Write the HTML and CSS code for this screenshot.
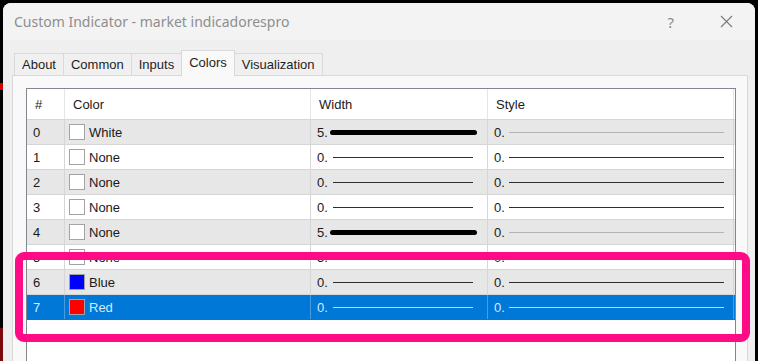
FILE: index.html
```html
<!DOCTYPE html>
<html lang="en">
<head>
  <meta charset="UTF-8" />
  <title>Custom Indicator - market indicadorespro</title>
  <link rel="stylesheet" href="styles.css">
</head>
<body>
  <div class="window">
    <div class="titlebar">
      <span class="title">Custom Indicator - market indicadorespro</span>
      <span class="help">?</span>
      <span class="close">
        <svg width="13" height="13" viewBox="0 0 13 13">
          <path d="M1 1 L12 12 M12 1 L1 12" stroke="#7a7a7a" stroke-width="1.1" fill="none"/>
        </svg>
      </span>
    </div>

    <div class="tabs">
      <div class="tab">About</div>
      <div class="tab">Common</div>
      <div class="tab">Inputs</div>
      <div class="tab active">Colors</div>
      <div class="tab">Visualization</div>
    </div>

    <div class="panel">
      <div class="list">
        <div class="row head">
          <div class="cell">#</div>
          <div class="cell">Color</div>
          <div class="cell">Width</div>
          <div class="cell">Style</div>
        </div>

        <div class="row alt">
          <div class="cell">0</div>
          <div class="cell color"><span class="swatch"></span>White</div>
          <div class="cell width">5.<span class="line thick"></span></div>
          <div class="cell style">0.<span class="line faint"></span></div>
        </div>
        <div class="row">
          <div class="cell">1</div>
          <div class="cell color"><span class="swatch"></span>None</div>
          <div class="cell width">0.<span class="line"></span></div>
          <div class="cell style">0.<span class="line"></span></div>
        </div>
        <div class="row alt">
          <div class="cell">2</div>
          <div class="cell color"><span class="swatch"></span>None</div>
          <div class="cell width">0.<span class="line"></span></div>
          <div class="cell style">0.<span class="line"></span></div>
        </div>
        <div class="row">
          <div class="cell">3</div>
          <div class="cell color"><span class="swatch"></span>None</div>
          <div class="cell width">0.<span class="line"></span></div>
          <div class="cell style">0.<span class="line"></span></div>
        </div>
        <div class="row alt">
          <div class="cell">4</div>
          <div class="cell color"><span class="swatch"></span>None</div>
          <div class="cell width">5.<span class="line thick"></span></div>
          <div class="cell style">0.<span class="line faint"></span></div>
        </div>
        <div class="row">
          <div class="cell">5</div>
          <div class="cell color"><span class="swatch"></span>None</div>
          <div class="cell width">5.<span class="line thick"></span></div>
          <div class="cell style">0.<span class="line faint"></span></div>
        </div>
        <div class="row alt">
          <div class="cell">6</div>
          <div class="cell color"><span class="swatch blue"></span>Blue</div>
          <div class="cell width">0.<span class="line"></span></div>
          <div class="cell style">0.<span class="line"></span></div>
        </div>
        <div class="row selected">
          <div class="cell">7</div>
          <div class="cell color"><span class="swatch red"></span>Red</div>
          <div class="cell width">0.<span class="line"></span></div>
          <div class="cell style">0.<span class="line"></span></div>
        </div>
      </div>
    </div>
  </div>

  <div class="highlight"></div>
</body>
</html>
```

FILE: styles.css
```css
* {
  box-sizing: border-box;
}

body {
  margin: 0;
  width: 758px;
  height: 361px;
  overflow: hidden;
  position: relative;
  font-family: "Liberation Sans", Arial, sans-serif;
  background-color: #000;
  background-image:
    linear-gradient(#d40000, #d40000),
    linear-gradient(#7a0a0a, #7a0a0a);
  background-repeat: no-repeat;
  background-size: 3px 7px, 3px 33px;
  background-position: 0 83px, 0 328px;
}

.window {
  margin: 3px 3px 0 3px;
  height: 358px;
  background: #efefef;
  border-radius: 8px 8px 0 0;
  overflow: hidden;
  display: flex;
  flex-direction: column;
}

/* title bar */
.titlebar {
  height: 37px;
  flex: none;
  background: #f3f3f3;
  display: flex;
  align-items: center;
  padding: 0 22px 0 11px;
}

.title {
  flex: 1;
  font-family: "Noto Sans", sans-serif;
  font-size: 14px;
  color: #8e8e8e;
}

.help {
  font-family: "Noto Sans", sans-serif;
  font-size: 15px;
  color: #8a8a8a;
  margin-right: 46px;
}

.close {
  display: flex;
  width: 13px;
  height: 13px;
}

/* tabs */
.tabs {
  height: 35px;
  flex: none;
  display: flex;
  align-items: flex-end;
  padding-left: 11px;
}

.tab {
  height: 22px;
  padding: 0 7px;
  border: 1px solid #d9d9d9;
  border-bottom: none;
  margin-right: -1px;
  background: #f0f0f0;
  font-size: 13px;
  line-height: 21px;
  color: #1e1e1e;
}

.tab.active {
  height: 26px;
  line-height: 23px;
  margin-bottom: -1px;
  background: #f9f9f9;
  position: relative;
  z-index: 1;
}

/* tab page */
.panel {
  flex: 1;
  margin: 0 7px 0 9px;
  background: #f9f9f9;
  border: 1px solid #d9d9d9;
  border-bottom: none;
  padding: 12px 11px 0 13px;
}

.list {
  height: 100%;
  background: #fff;
  border: 1px solid #82878f;
  border-bottom: none;
}

.row {
  display: grid;
  grid-template-columns: 38px 246px 177px 246px;
  height: 25px;
  border-bottom: 1px solid #d6d6d6;
}

.row.alt {
  background: #e7e7e7;
}

.cell {
  display: flex;
  align-items: center;
  padding-left: 6px;
  border-right: 1px solid #d6d6d6;
  font-size: 13px;
  color: #1a1a1a;
  white-space: nowrap;
}

.row.head {
  height: 31px;
  background: #fff;
}

.row.head .cell {
  padding-left: 8px;
  border-right-color: #e6e6e6;
}

.cell.color {
  padding-left: 4px;
}

.swatch {
  width: 16px;
  height: 16px;
  margin-right: 4px;
  border: 1px solid #a3a3a3;
  background: #fff;
}

.swatch.blue {
  background: #0000ff;
}

.swatch.red {
  background: #ff0000;
}

.line {
  height: 1px;
  width: 140px;
  margin-left: 5px;
  background: #2e2e2e;
}

.line.thick {
  height: 5px;
  width: 147px;
  margin-left: 2px;
  border-radius: 3px;
  background: #000;
}

.style .line {
  width: 215px;
  margin-left: 4px;
}

.line.faint {
  background: #b3b3b3;
}

.row.selected {
  background: #0078d7;
  border-bottom-color: #0078d7;
}

.row.selected .cell {
  color: #d8eaff;
  border-right-color: #4a9be0;
}

.row.selected .line {
  background: #b9dbf7;
}

.row.selected .swatch {
  border-color: #9aa4ae;
}

/* annotation */
.highlight {
  position: absolute;
  left: 15px;
  top: 252px;
  width: 735px;
  height: 90px;
  border: 8px solid #ff0a87;
  border-radius: 9px;
}
```
